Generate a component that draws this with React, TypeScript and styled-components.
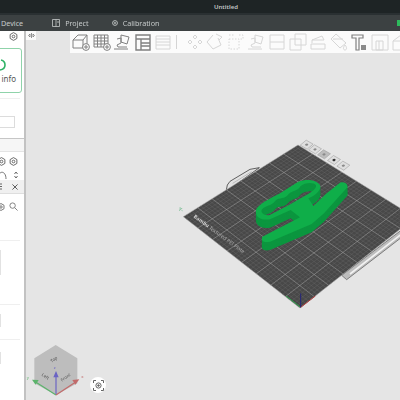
import styled, { createGlobalStyle } from "styled-components";
import { ReactNode } from "react";

const Global = createGlobalStyle`
  html, body {
    margin: 0;
    padding: 0;
    overflow: hidden;
    background: #e5e5e5;
  }
  #root {
    width: 400px;
    height: 400px;
    overflow: hidden;
  }
`;

const Frame = styled.div`
  width: 400px;
  height: 400px;
  display: flex;
  flex-direction: column;
  font-family: "Noto Sans", "Liberation Sans", sans-serif;
  filter: blur(0.35px);
`;
const TitleBar = styled.div`
  height: 13px;
  flex: none;
  display: flex;
  align-items: center;
  justify-content: center;
  padding-left: 52px;
  background: #1e2425;
  border-bottom: 2px solid #2a3032;
  color: #c4c8c8;
  font-size: 6px;
  font-weight: 600;
`;
const MenuBar = styled.div`
  height: 16px;
  flex: none;
  display: flex;
  align-items: center;
  position: relative;
  background: #3c4142;
  color: #c6caca;
  font-size: 7.2px;
`;
const MenuItem = styled.div<{ $left: number }>`
  display: flex;
  align-items: center;
  gap: 5px;
  margin-left: ${(p) => p.$left}px;
  svg {
    flex: none;
  }
`;
const StatusDot = styled.div`
  position: absolute;
  right: 0;
  top: 5px;
  width: 3px;
  height: 6px;
  background: #2dbb5c;
`;
const Body = styled.div`
  flex: 1;
  display: flex;
  min-height: 0;
`;
const Sidebar = styled.div`
  width: 24px;
  flex: none;
  display: flex;
  flex-direction: column;
  background: #fff;
  border-right: 2px solid #c2c2c2;
  overflow: hidden;
  color: #6a6a6a;
`;
const SideHead = styled.div`
  height: 17px;
  flex: none;
  display: flex;
  justify-content: flex-end;
  align-items: flex-start;
  padding: 1px 6px 0 0;
  box-sizing: border-box;
`;
const InfoCard = styled.div`
  height: 45px;
  flex: none;
  width: 40px;
  margin-left: -18px;
  margin-right: 2px;
  box-sizing: border-box;
  border: 1px solid #8fd3aa;
  border-radius: 3px;
  display: flex;
  flex-direction: column;
  align-items: flex-end;
  padding: 9px 5px 0 0;
  gap: 1px;
  color: #555;
  font-size: 8px;
  line-height: 11px;
  svg {
    align-self: flex-start;
    margin-left: 17px;
  }
`;
const FaintLine = styled.div<{ $top: number }>`
  height: 1px;
  flex: none;
  margin-top: ${(p) => p.$top}px;
  margin-right: 4px;
  background: #efefef;
`;
const InputStub = styled.div`
  height: 12px;
  width: 15px;
  flex: none;
  margin-top: 17px;
  box-sizing: border-box;
  border: 1px solid #dcdcdc;
  border-left: none;
`;
const SectionBand = styled.div`
  height: 14px;
  flex: none;
  box-sizing: border-box;
  margin-top: 10px;
  background: #f6f6f6;
  border-top: 1px solid #c6c6c6;
  border-bottom: 1px solid #e4e4e4;
`;
const IconRow = styled.div<{ $height: number; $tint?: boolean }>`
  height: ${(p) => p.$height}px;
  flex: none;
  box-sizing: border-box;
  display: flex;
  align-items: center;
  justify-content: space-between;
  padding-right: 6px;
  margin-left: -3px;
  background: ${(p) => (p.$tint ? "#f0f0f0" : "transparent")};
  border-bottom: ${(p) => (p.$tint ? "1px solid #dedede" : "none")};
`;
const Stub = styled.div<{ $top: number; $height: number }>`
  width: 1px;
  height: ${(p) => p.$height}px;
  flex: none;
  margin-top: ${(p) => p.$top}px;
  background: #e2e2e2;
`;
const Viewport = styled.div`
  flex: 1;
  position: relative;
  background: #e5e5e5;
  overflow: hidden;
`;
const CollapseTab = styled.div`
  position: absolute;
  left: 0;
  top: 0;
  width: 10px;
  height: 9px;
  background: #fafafa;
  display: flex;
  align-items: center;
  justify-content: center;
`;
const Toolbar = styled.div`
  height: 22px;
  margin-left: 44px;
  padding-left: 2px;
  display: flex;
  align-items: center;
  gap: 2.6px;
  background: #fbfbfb;
  position: relative;
`;
const Tool = styled.div<{ $muted?: boolean }>`
  width: 18px;
  height: 18px;
  flex: none;
  color: ${(p) => (p.$muted ? "#d6d6d6" : "#808080")};
  svg {
    display: block;
  }
`;
const ToolSep = styled.div`
  width: 1px;
  height: 14px;
  flex: none;
  margin: 0 6px 0 1px;
  background: #d4d4d4;
`;
const Scene = styled.svg`
  position: absolute;
  left: 144px;
  top: 99px;
`;
const Cube = styled.svg`
  position: absolute;
  left: 0;
  bottom: 0;
`;
const FitButton = styled.div`
  position: absolute;
  left: 64px;
  top: 346px;
  width: 16px;
  height: 16px;
  border-radius: 50%;
  background: #fff;
  color: #666;
  display: flex;
  align-items: center;
  justify-content: center;
`;

function Glyph({ children }: { children: ReactNode }) {
  return (
    <svg width="18" height="18" viewBox="0 0 18 18" fill="none" stroke="currentColor" strokeWidth="1">
      {children}
    </svg>
  );
}

function Gear({ size = 9 }: { size?: number }) {
  return (
    <svg width={size} height={size} viewBox="0 0 12 12" fill="none" stroke="#666" strokeWidth="1.3">
      <path d="M6 .8l4.5 2.6v5.2L6 11.2 1.5 8.6V3.4z" />
      <circle cx="6" cy="6" r="1.8" />
    </svg>
  );
}

function Search() {
  return (
    <svg width="9" height="9" viewBox="0 0 10 10" fill="none" stroke="#777" strokeWidth="1">
      <circle cx="4" cy="4" r="3" />
      <path d="M6.3 6.3L9.5 9.5" />
    </svg>
  );
}

const plusBadge = (
  <>
    <circle cx="14" cy="14" r="3.4" fill="#fbfbfb" />
    <path d="M12 14h4M14 12v4" />
  </>
);

const tools: { muted?: boolean; sep?: boolean; art?: ReactNode }[] = [
  {
    art: (
      <>
        <path d="M1 7l5-5h9v9l-4 4H1zM1 7h10v8M11 7l4-5" />
        {plusBadge}
      </>
    ),
  },
  {
    art: (
      <>
        <path d="M1 2h14v12H1zM1 5h14M1 8h14M1 11h14M4.500 2v12M8 2v12M11.500 2v12" />
        {plusBadge}
      </>
    ),
  },
  { art: <path d="M8 2l8 2-2 7-6-2zM4 6l4-1v5l-4 2 1 2h9M1 16h14" /> },
  { art: <path d="M2 2h14v15H2zM2 6h14M7 6v11M7 10h9M7 13h9" strokeWidth="1.4" /> },
  { muted: true, art: <path d="M2 3h14v13H2zM2 6h14M2 9h14M2 12h14" /> },
  { sep: true },
  {
    muted: true,
    art: <path d="M9 2l2 2-2 2-2-2zM9 12l2 2-2 2-2-2zM2 9l2-2 2 2-2 2zM12 9l2-2 2 2-2 2z" />,
  },
  { muted: true, art: <path d="M7 2L1 9l6 7 8-4-3-7M10 1l6 3-3 3" /> },
  {
    muted: true,
    art: <path d="M2 6h10v10H2zM12 2h4v4h-4M2 2h6" strokeDasharray="1.500 1.500" />,
  },
  { muted: true, art: <path d="M8 2l8 2-2 7-6-2zM4 6l4-1v5l-4 2 1 2h9M1 16h14" /> },
  { muted: true, art: <path d="M2 2h14v14H2zM2 9h14" /> },
  { muted: true, art: <path d="M1 6h11v11H1zM6 1h11v11H6z" /> },
  { muted: true, art: <path d="M2 11h14v5H2zM3 7l10-4 2 4zM3 7v3" /> },
  { muted: true, art: <path d="M6 1l10 9-6 5-9-9zM3 6h10M15 12c2 2 2 5 0 5s-2-3 0-5z" /> },
  {
    art: (
      <>
        <path d="M2 2h11v3H9v12H6V5H2z" strokeWidth="1.2" />
        <rect x="11" y="12" width="5" height="5" fill="#8a8a8a" stroke="none" />
      </>
    ),
  },
  { muted: true, art: <path d="M1 2h16v15H1zM5 8h7v9H5zM8 8v9" /> },
  { muted: true, art: <path d="M1 8l8-6 8 6v9H1zM1 8h16M9 8v9" /> },
];

// corners of the build plate in zoomed scene units (3 units = 1px)
const A = [40, 260];
const B = [384, 45];
const C = [735, 262];
const D = [390, 534];

function plate(u: number, v: number) {
  const top = [A[0] + (B[0] - A[0]) * u, A[1] + (B[1] - A[1]) * u];
  const bottom = [D[0] + (C[0] - D[0]) * u, D[1] + (C[1] - D[1]) * u];
  return [top[0] + (bottom[0] - top[0]) * v, top[1] + (bottom[1] - top[1]) * v];
}

const DIV = 40;
const gridLines = Array.from({ length: DIV + 1 }, (_, i) => {
  const t = i / DIV;
  return {
    major: i % 5 === 0,
    a: [plate(t, 0), plate(t, 1)],
    b: [plate(0, t), plate(1, t)],
  };
});

const modelPath =
  "M258 240 C262 225 300 205 330 190 L385 155 C410 145 440 150 450 165 C455 178 440 195 415 205 L430 228 L470 190 L510 158 C525 153 535 165 532 172 L462 250 L425 282 L300 335 C280 340 272 330 277 320 L300 308 L390 262 L362 240 L300 268 C270 272 255 260 258 240 Z " +
  "M276 238 C288 224 302 230 316 212 C328 200 344 210 356 192 C368 180 380 186 392 168 C406 156 432 156 438 166 C440 176 426 186 402 199 L357 225 L299 255 C282 258 270 249 276 238 Z";

const plateIcons = [
  [410, 44],
  [435, 58],
  [462, 73],
  [492, 90],
  [520, 107],
];

function App() {
  return (
    <Frame>
      <Global />
      <TitleBar>Untitled</TitleBar>
      <MenuBar>
        <MenuItem $left={1}>Device</MenuItem>
        <MenuItem $left={29}>
          <svg width="8" height="8" viewBox="0 0 8 8" fill="none" stroke="#c6caca" strokeWidth=".8">
            <path d="M.5.500h7v7h-7zM4 .5v7M5 3h2" />
          </svg>
          Project
        </MenuItem>
        <MenuItem $left={23}>
          <svg width="6" height="6" viewBox="0 0 8 8" fill="none" stroke="#c6caca" strokeWidth="1.200">
            <circle cx="4" cy="4" r="3.200" />
            <circle cx="4" cy="4" r=".8" />
          </svg>
          Calibration
        </MenuItem>
        <StatusDot />
      </MenuBar>
      <Body>
        <Sidebar>
          <SideHead>
            <Gear />
          </SideHead>
          <InfoCard>
            <svg width="7" height="14" viewBox="0 0 7 14" fill="none" stroke="#2fb266" strokeWidth="1.600">
              <path d="M1 2c2.500.5 4 2.500 4 5s-1.500 4.500-5 5" />
            </svg>
            info
          </InfoCard>
          <FaintLine $top={5} />
          <InputStub />
          <SectionBand />
          <IconRow $height={18}>
            <Gear />
            <Gear />
          </IconRow>
          <IconRow $height={10}>
            <svg width="10" height="8" viewBox="0 0 10 8" fill="none" stroke="#777" strokeWidth="1">
              <path d="M1 8c0-9 8-9 8 0" />
            </svg>
            <svg width="4" height="8" viewBox="0 0 4 8" fill="none" stroke="#666" strokeWidth="1">
              <path d="M.5 3L2 1l1.500 2M.5 5L2 7l1.500-2" />
            </svg>
          </IconRow>
          <IconRow $height={14} $tint>
            <svg width="5" height="7" viewBox="0 0 5 7" stroke="#666" strokeWidth="1">
              <path d="M0 1h5M0 3.500h5M0 6h5" />
            </svg>
            <svg width="6" height="6" viewBox="0 0 7 7" fill="none" stroke="#555" strokeWidth="1.100">
              <path d="M.5 6.500l6-6M.5.500l6 6" />
            </svg>
          </IconRow>
          <IconRow $height={25}>
            <Gear size={8} />
            <Search />
          </IconRow>
          <FaintLine $top={21} />
          <Stub $top={9} $height={25} />
          <FaintLine $top={29} />
          <Stub $top={9} $height={13} />
          <FaintLine $top={12} />
          <Stub $top={12} $height={12} />
        </Sidebar>
        <Viewport>
          <Scene width="230" height="180" viewBox="0 0 690 540">
            {/* rear and front plate tabs */}
            <path d="M168 185L172 165L180 154L240 118L268 113Z" fill="#e2e2e2" stroke="#454545" strokeWidth="2.500" />
            <path d="M188 160L245 125" stroke="#a8a8a8" strokeWidth="2" />
            <path d="M515 436L530 449L700 318L700 296Z" fill="#bdbdbd" stroke="#555" strokeWidth="2" />
            <path d="M540 432L695 312" stroke="#f2f2f2" strokeWidth="5" />
            <polygon points={[A, B, C, D].map((p) => p.join(",")).join(" ")} fill="#484848" />
            {gridLines.map((g, i) => (
              <g key={i} stroke={g.major ? "#a4a4a4" : "#6d6d6d"} strokeWidth={g.major ? 1.6 : 1}>
                <line x1={g.a[0][0]} y1={g.a[0][1]} x2={g.a[1][0]} y2={g.a[1][1]} />
                <line x1={g.b[0][0]} y1={g.b[0][1]} x2={g.b[1][0]} y2={g.b[1][1]} />
              </g>
            ))}
            <text transform="translate(70 262) rotate(36)" fontSize="15" fill="#b0b0b0">
              <tspan fontWeight="700" fill="#d4d4d4">
                Bambu
              </tspan>{" "}
              Textured PEI Plate
            </text>
            {plateIcons.map(([x, y], i) => (
              <g key={i} transform={`translate(${x} ${y}) rotate(30) skewX(-20)`}>
                <rect x="-12" y="-11" width="24" height="22" fill={i === 2 ? "#bcbcbc" : "#dedede"} stroke="#9c9c9c" strokeWidth="1.500" />
                <circle r="4" fill={i === 3 ? "#333" : "#8a8a8a"} />
              </g>
            ))}
            <text transform="translate(24 240) rotate(30)" fontSize="15" fontWeight="700" fill="#7fbf98">
              Y-
            </text>
            {/* bed axes */}
            <path d="M392 532L348 498" stroke="#2fa84f" strokeWidth="3" />
            <path d="M392 532L436 498" stroke="#b03a3a" strokeWidth="3" />
            <path d="M392 532V490" stroke="#24247a" strokeWidth="3" />
            {/* extruded sides, then the top face */}
            {[25, 22, 19, 15, 11, 7, 3].map((dy) => (
              <path key={dy} d={modelPath} transform={`translate(0 ${dy})`} fill="#0b963f" fillRule="evenodd" />
            ))}
            <path d={modelPath} fill="#0fae49" fillRule="evenodd" />
          </Scene>
          <Toolbar>
            {tools.map((t, i) =>
              t.sep ? (
                <ToolSep key={i} />
              ) : (
                <Tool key={i} $muted={t.muted}>
                  <Glyph>{t.art}</Glyph>
                </Tool>
              )
            )}
          </Toolbar>
          <CollapseTab>
            <svg width="7" height="5" viewBox="0 0 7 5" fill="none" stroke="#777" strokeWidth=".8">
              <path d="M3.500 0v5M.5 2.500L2 1v3zM6.500 2.500L5 1v3z" />
            </svg>
          </CollapseTab>
          <Cube width="70" height="60" viewBox="0 0 210 180">
            <g transform="translate(-78 -360)">
              <polygon points="167,375 232,415 232,490 168,525 103,490 103,415" fill="#bdbdbd" />
              <text transform="translate(155 428) rotate(-35)" fontSize="13" fill="#555">
                Top
              </text>
              <text transform="translate(124 466) rotate(35)" fontSize="13" fill="#555">
                Left
              </text>
              <text transform="translate(186 485) rotate(-35)" fontSize="13" fill="#555">
                Front
              </text>
              <path d="M168 525V470" stroke="#6a63c4" strokeWidth="3.500" />
              <path d="M168 453l-8 19h16z" fill="#6a63c4" />
              <path d="M168 525L108 487" stroke="#5bb36b" strokeWidth="3.500" />
              <path d="M96 479l20 1-9 14z" fill="#5bb36b" />
              <path d="M168 525L226 487" stroke="#c26a6a" strokeWidth="3.500" />
              <path d="M238 478l-21 2 9 14z" fill="#c26a6a" />
              <text x="161" y="447" fontSize="12" fill="#6a63c4">
                z
              </text>
              <text x="80" y="477" fontSize="13" fill="#5bb36b">
                y
              </text>
              <text x="244" y="474" fontSize="13" fill="#c26a6a">
                x
              </text>
            </g>
          </Cube>
          <FitButton>
            <svg width="11" height="11" viewBox="0 0 11 11" fill="none" stroke="currentColor" strokeWidth="1">
              <path d="M.5 3V.5H3M8 .5h2.500V3M10.500 8v2.500H8M3 10.500H.5V8" />
              <circle cx="5.500" cy="5.500" r="2.600" />
              <circle cx="5.500" cy="5.500" r=".8" fill="currentColor" />
            </svg>
          </FitButton>
        </Viewport>
      </Body>
    </Frame>
  );
}

export default App;
